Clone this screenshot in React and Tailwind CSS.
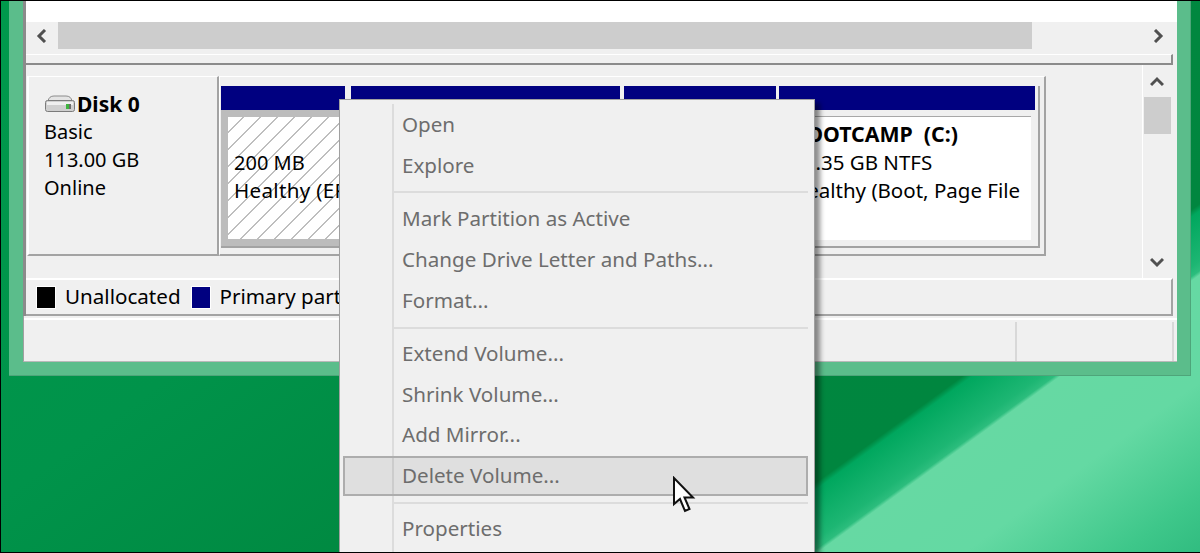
import React from 'react';

const wallpaper =
  'bg-[linear-gradient(144deg,#00994c_0%,#00934a_35%,#00873f_62%,#00863f_75.5%,#00a75e_76%,#1db673_79.5%,#2cbd7d_80.2%,#66d9a3_80.5%,#64d9a3_88%,#3ec78a_96%,#31bc80_100%)]';

const hatch =
  'bg-[repeating-linear-gradient(135deg,#ffffff_0px,#ffffff_10.5px,#bebebe_10.5px,#bebebe_12px)]';

function Chevron({ dir, className }) {
  const paths = {
    left: 'M9 1 L3 7 L9 13',
    right: 'M3 1 L9 7 L3 13',
    up: 'M1 9 L7 3 L13 9',
    down: 'M1 3 L7 9 L13 3',
  };
  return (
    <svg width="14" height="14" viewBox="0 0 14 14" className={className} fill="none">
      <path d={paths[dir]} stroke="#505050" strokeWidth="3" />
    </svg>
  );
}

function DiskIcon() {
  return (
    <svg width="30" height="18" viewBox="0 0 30 18" className="ml-[1px] mr-[2px] shrink-0">
      <path d="M3 6 Q4 1 9 1 H21 Q26 1 27 6 Z" fill="#e4e4e4" stroke="#8c8c8c" />
      <rect x="0.5" y="5.5" width="29" height="11" rx="2" fill="#cfcfcf" stroke="#7b7b7b" />
      <rect x="2" y="7" width="26" height="3" fill="#efefef" />
      <rect x="21" y="9" width="3" height="5" fill="#3fb53f" />
      <rect x="24" y="9" width="2" height="5" fill="#6c6c6c" />
    </svg>
  );
}

function HScrollBar() {
  return (
    <div className="flex h-[28px] items-center bg-[#f0f0f0] pl-[10px] pr-[11px]">
      <Chevron dir="left" />
      <div className="ml-[8px] h-[27px] w-[974px] self-start bg-[#cdcdcd]" />
      <div className="flex-1" />
      <Chevron dir="right" />
    </div>
  );
}

function DiskLabel() {
  return (
    <div className="flex h-[180px] w-[192px] shrink-0 flex-col border-t border-l-2 border-b-2 border-r-[2px] border-t-white border-l-white border-b-[#a3a3a3] border-r-[#a3a3a3] pl-[15px] pt-[13px] text-[20px] leading-[28px] text-black">
      <div className="flex items-center">
        <DiskIcon />
        <span className="text-[21px] font-bold">Disk 0</span>
      </div>
      <div>Basic</div>
      <div>113.00 GB</div>
      <div>Online</div>
    </div>
  );
}

function Partitions() {
  return (
    <div className="flex h-[180px] w-[827px] shrink-0 flex-col border-t border-l border-r-2 border-b-2 border-t-white border-l-white border-r-[#a3a3a3] border-b-[#a3a3a3] pl-[1px] pr-[4px] pt-[9px]">
      <div className="flex h-[162px] border-r-2 border-b-2 border-r-[#a3a3a3] border-b-[#a3a3a3] text-[20px] leading-[28px] text-black">
        {/* system partition */}
        <div className="flex w-[124px] shrink-0 flex-col">
          <div className="h-[24px] bg-[#000080]" />
          <div className="flex-1 bg-[#bcbcbc] pt-[7px] pb-[7px] pl-[7px]">
            <div className={`h-full overflow-hidden whitespace-nowrap pl-[6px] pt-[32px] ${hatch}`}>
              <div>200 MB</div>
              <div className="-mt-[1px] text-[20.6px] tracking-[0.3px]">Healthy (EFI System)</div>
            </div>
          </div>
        </div>
        <div className="ml-[6px] flex w-[269px] shrink-0 flex-col">
          <div className="h-[24px] bg-[#000080]" />
        </div>
        <div className="ml-[4px] flex w-[152px] shrink-0 flex-col">
          <div className="h-[24px] bg-[#000080]" />
        </div>
        {/* BOOTCAMP */}
        <div className="ml-[3px] flex w-[256px] shrink-0 flex-col">
          <div className="h-[24px] bg-[#000080]" />
          <div className="flex-1 bg-[#f0f0f0] pt-[6px] pb-[6px] pr-[4px]">
            <div className="h-full overflow-hidden whitespace-nowrap border-t border-t-[#a8a8a8] bg-white pl-[13px] pt-[3px] text-[20.5px]">
              <div className="text-[21.3px] font-bold">BOOTCAMP&nbsp; (C:)</div>
              <div>52.35 GB NTFS</div>
              <div>Healthy (Boot, Page File</div>
            </div>
          </div>
        </div>
      </div>
    </div>
  );
}

function VScrollBar() {
  return (
    <div className="flex h-full w-[29px] flex-col items-center border-l border-l-white pt-[11px] pb-[8px]">
      <Chevron dir="up" />
      <div className="mt-[7px] h-[37px] w-[27px] bg-[#cdcdcd]" />
      <div className="flex-1" />
      <Chevron dir="down" />
    </div>
  );
}

function Legend() {
  return (
    <div className="flex h-[38px] w-[1147px] items-center border-t-2 border-r-2 border-b-2 border-t-white border-r-[#a3a3a3] border-b-[#a3a3a3] pl-[10px] text-[20.6px] text-black">
      <div className="h-[23px] w-[20px] border border-white bg-black" />
      <span className="ml-[9px] -translate-y-px">Unallocated</span>
      <div className="ml-[10px] h-[23px] w-[20px] border border-white bg-[#000080]" />
      <span className="ml-[9px] -translate-y-px">Primary partition</span>
    </div>
  );
}

function StatusBar() {
  return (
    <div className="flex h-[46px] border-l border-b border-l-[#a0a0a0] border-b-[#b9b9b9] pt-[2px]">
      <div className="flex flex-1 border-t-2 border-t-white pr-[3px] pt-[2px]">
        <div className="flex-1" />
        <div className="w-[159px] border-l-2 border-r-2 border-l-[#d8d8d8] border-r-[#d8d8d8]" />
      </div>
    </div>
  );
}

function MenuItem({ label }) {
  return <div className="flex h-[40.67px] items-center pl-[8px]">{label}</div>;
}

function MenuSep({ className }) {
  return (
    <div className={className}>
      <div className="h-[2px] bg-[#dcdcdc]" />
    </div>
  );
}

function ContextMenu() {
  return (
    <div className="absolute left-[338px] top-[98px] flex h-[460px] w-[476px] border border-[#a0a0a0] bg-[#f0f0f0] pt-[4px] pr-[6px] text-[20.6px] text-[#6d6d6d] shadow-[5px_4px_5px_rgba(0,0,0,0.45)]">
      <div className="w-[54px] shrink-0 border-r-2 border-r-[#dcdcdc]" />
      <div className="flex-1">
        <MenuItem label="Open" />
        <MenuItem label="Explore" />
        <MenuSep className="h-[13px] pt-[6px]" />
        <MenuItem label="Mark Partition as Active" />
        <MenuItem label="Change Drive Letter and Paths..." />
        <MenuItem label="Format..." />
        <MenuSep className="h-[13px] pt-[7px]" />
        <MenuItem label="Extend Volume..." />
        <MenuItem label="Shrink Volume..." />
        <MenuItem label="Add Mirror..." />
        <div className="relative flex h-[40.67px] items-center pl-[8px]">
          <div className="absolute -left-[51px] right-0 top-[1px] h-[40px] border-2 border-[#adadad] bg-black/[0.07]" />
          <span className="relative">Delete Volume...</span>
        </div>
        <MenuSep className="h-[12px] pt-[6px]" />
        <MenuItem label="Properties" />
      </div>
    </div>
  );
}

function Cursor() {
  return (
    <svg width="26" height="38" viewBox="0 0 26 38" className="absolute left-[671px] top-[475px]">
      <path
        d="M2 2 L2 28 L8 23 L13 35 L17.5 33 L12.5 21.5 L21 21.5 Z"
        fill="#ffffff"
        stroke="#111111"
        strokeWidth="2"
        strokeLinejoin="miter"
      />
    </svg>
  );
}

export default function App() {
  return (
    <div
      className={`relative h-[553px] w-[1200px] overflow-hidden border-y border-l border-black font-['Noto_Sans',sans-serif] ${wallpaper}`}
    >
      {/* window */}
      <div className="ml-[8px] h-[375px] w-[1182px] border-r border-b border-[#4ea57a] bg-[#5bbd8b] pl-[14px] pr-[13px] pb-[13px]">
        <div className="h-full bg-[#f0f0f0]">
          <div className="h-[315px] border-l-[3px] border-l-[#8b8b8b]">
            <div className="h-[21px] bg-white" />
            <HScrollBar />
            {/* sunken splitter */}
            <div className="h-[15px] pt-[4px]">
              <div className="h-[11px] w-[1147px] border-t border-r-2 border-b-2 border-t-white border-r-[#8b8b8b] border-b-[#8b8b8b]" />
            </div>
            <div className="flex h-[213px]">
              <div className="flex w-[1116px] shrink-0 items-start pt-[11px] pl-[1px]">
                <DiskLabel />
                <Partitions />
              </div>
              <VScrollBar />
            </div>
            <Legend />
          </div>
          <StatusBar />
        </div>
      </div>
      <ContextMenu />
      <Cursor />
    </div>
  );
}
